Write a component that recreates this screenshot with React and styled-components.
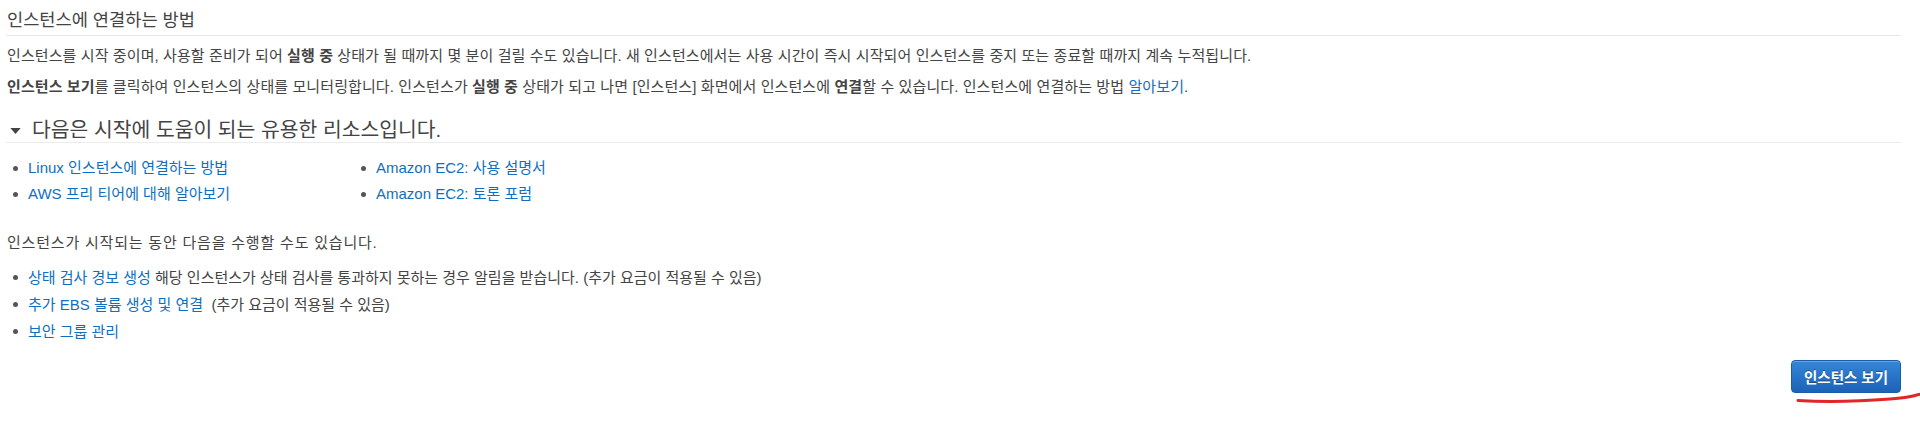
import React from 'react'
import styled, { createGlobalStyle } from 'styled-components'

const GlobalStyle = createGlobalStyle`
  body {
    margin: 0;
    background: #fff;
    font-family: "Liberation Sans", "Noto Sans CJK KR", Arial, sans-serif;
    color: #444;
  }
`

const resources = [
  ['Linux 인스턴스에 연결하는 방법', 'AWS 프리 티어에 대해 알아보기'],
  ['Amazon EC2: 사용 설명서', 'Amazon EC2: 토론 포럼'],
]

export default function App() {
  return (
    <Page>
      <GlobalStyle />
      <Title>인스턴스에 연결하는 방법</Title>
      <Para top={10}>
        인스턴스를 시작 중이며, 사용할 준비가 되어 <b>실행 중</b> 상태가 될 때까지 몇 분이 걸릴 수도 있습니다. 새 인스턴스에서는 사용 시간이 즉시 시작되어 인스턴스를 중지 또는 종료할 때까지 계속 누적됩니다.
      </Para>
      <Para top={11}>
        <b>인스턴스 보기</b>를 클릭하여 인스턴스의 상태를 모니터링합니다. 인스턴스가 <b>실행 중</b> 상태가 되고 나면 [인스턴스] 화면에서 인스턴스에 <b>연결</b>할 수 있습니다. 인스턴스에 연결하는 방법 <Link href="#">알아보기</Link>.
      </Para>

      <SectionHead>
        <Caret viewBox="0 0 12 7">
          <path d="M0 0 L12 0 L6 7 Z" fill="#444" />
        </Caret>
        다음은 시작에 도움이 되는 유용한 리소스입니다.
      </SectionHead>
      <Columns>
        {resources.map((col, i) => (
          <List key={i} wide={i === 0} rowHeight={26}>
            {col.map((r) => (
              <Item key={r}>
                <Link href="#">{r}</Link>
              </Item>
            ))}
          </List>
        ))}
      </Columns>

      <Para top={26} spacing={0.8}>인스턴스가 시작되는 동안 다음을 수행할 수도 있습니다.</Para>
      <List rowHeight={27} top={11}>
        <Item>
          <Link href="#">상태 검사 경보 생성</Link>&nbsp;해당 인스턴스가 상태 검사를 통과하지 못하는 경우 알림을 받습니다. (추가 요금이 적용될 수 있음)
        </Item>
        <Item>
          <Link href="#">추가 EBS 볼륨 생성 및 연결</Link>&nbsp;&nbsp;(추가 요금이 적용될 수 있음)
        </Item>
        <Item>
          <Link href="#">보안 그룹 관리</Link>
        </Item>
      </List>

      <Footer>
        <PrimaryButton>인스턴스 보기</PrimaryButton>
        {/* hand-drawn red mark under the button */}
        <Scribble viewBox="0 0 128 14" width="128" height="14">
          <path
            d="M4 10.5 C 30 12, 70 11, 96 9 S 118 5.5, 128 4"
            fill="none"
            stroke="#e3242b"
            strokeWidth="3"
            strokeLinecap="round"
          />
        </Scribble>
      </Footer>
    </Page>
  )
}

const Page = styled.div`
  width: 1920px;
  height: 432px;
  box-sizing: border-box;
  padding: 0 19px 0 6px;
  overflow: hidden;
`

const Title = styled.h2`
  margin: 9px 0 0;
  padding: 0 0 4px 1px;
  font-size: 17.6px;
  line-height: 22px;
  font-weight: normal;
  color: #444;
  border-bottom: 1px solid #e8e8e8;
`

const Para = styled.p`
  margin: ${(p) => p.top}px 0 0;
  padding-left: 1px;
  font-size: 15px;
  line-height: 20px;
  letter-spacing: ${(p) => (p.spacing ? p.spacing : 0.1)}px;
  white-space: nowrap;
  & b {
    font-weight: bold;
  }
`

const Link = styled.a`
  color: #0f6fc0;
  text-decoration: none;
`

const SectionHead = styled.h3`
  display: flex;
  align-items: center;
  gap: 11px;
  margin: 21px 0 0;
  padding-left: 4px;
  font-size: 20.4px;
  line-height: 24px;
  font-weight: normal;
  color: #444;
  border-bottom: 1px solid #ececec;
`

const Caret = styled.svg`
  width: 11px;
  height: 6px;
  margin-top: 1px;
`

const Columns = styled.div`
  display: flex;
  margin-top: 12px;
`

const List = styled.ul`
  list-style: none;
  margin: ${(p) => (p.top ? `${p.top}px` : 0)} 0 0;
  padding: 0;
  width: ${(p) => (p.wide ? '348px' : 'auto')};
  & li {
    line-height: ${(p) => p.rowHeight}px;
  }
`

const Item = styled.li`
  display: flex;
  align-items: center;
  font-size: 15px;
  white-space: nowrap;
  &::before {
    content: '';
    flex: none;
    width: 5px;
    height: 5px;
    border-radius: 50%;
    background: #555;
    margin: 0 10px 0 7px;
  }
`

const Footer = styled.div`
  position: relative;
  display: flex;
  justify-content: flex-end;
  margin-top: 15px;
`

const PrimaryButton = styled.button`
  width: 110px;
  height: 33px;
  padding: 0;
  border: 1px solid #1a5ca6;
  border-radius: 4px;
  background: linear-gradient(#3586d8, #1c63b6);
  box-shadow: inset 0 1px 0 rgba(255, 255, 255, 0.25);
  color: #fff;
  font-family: "Liberation Sans", "Noto Sans CJK KR", sans-serif;
  font-size: 14.5px;
  font-weight: bold;
  text-shadow: 0 -1px 0 rgba(0, 0, 0, 0.35);
  cursor: pointer;
`

const Scribble = styled.svg`
  position: absolute;
  right: -21px;
  top: 30px;
`
